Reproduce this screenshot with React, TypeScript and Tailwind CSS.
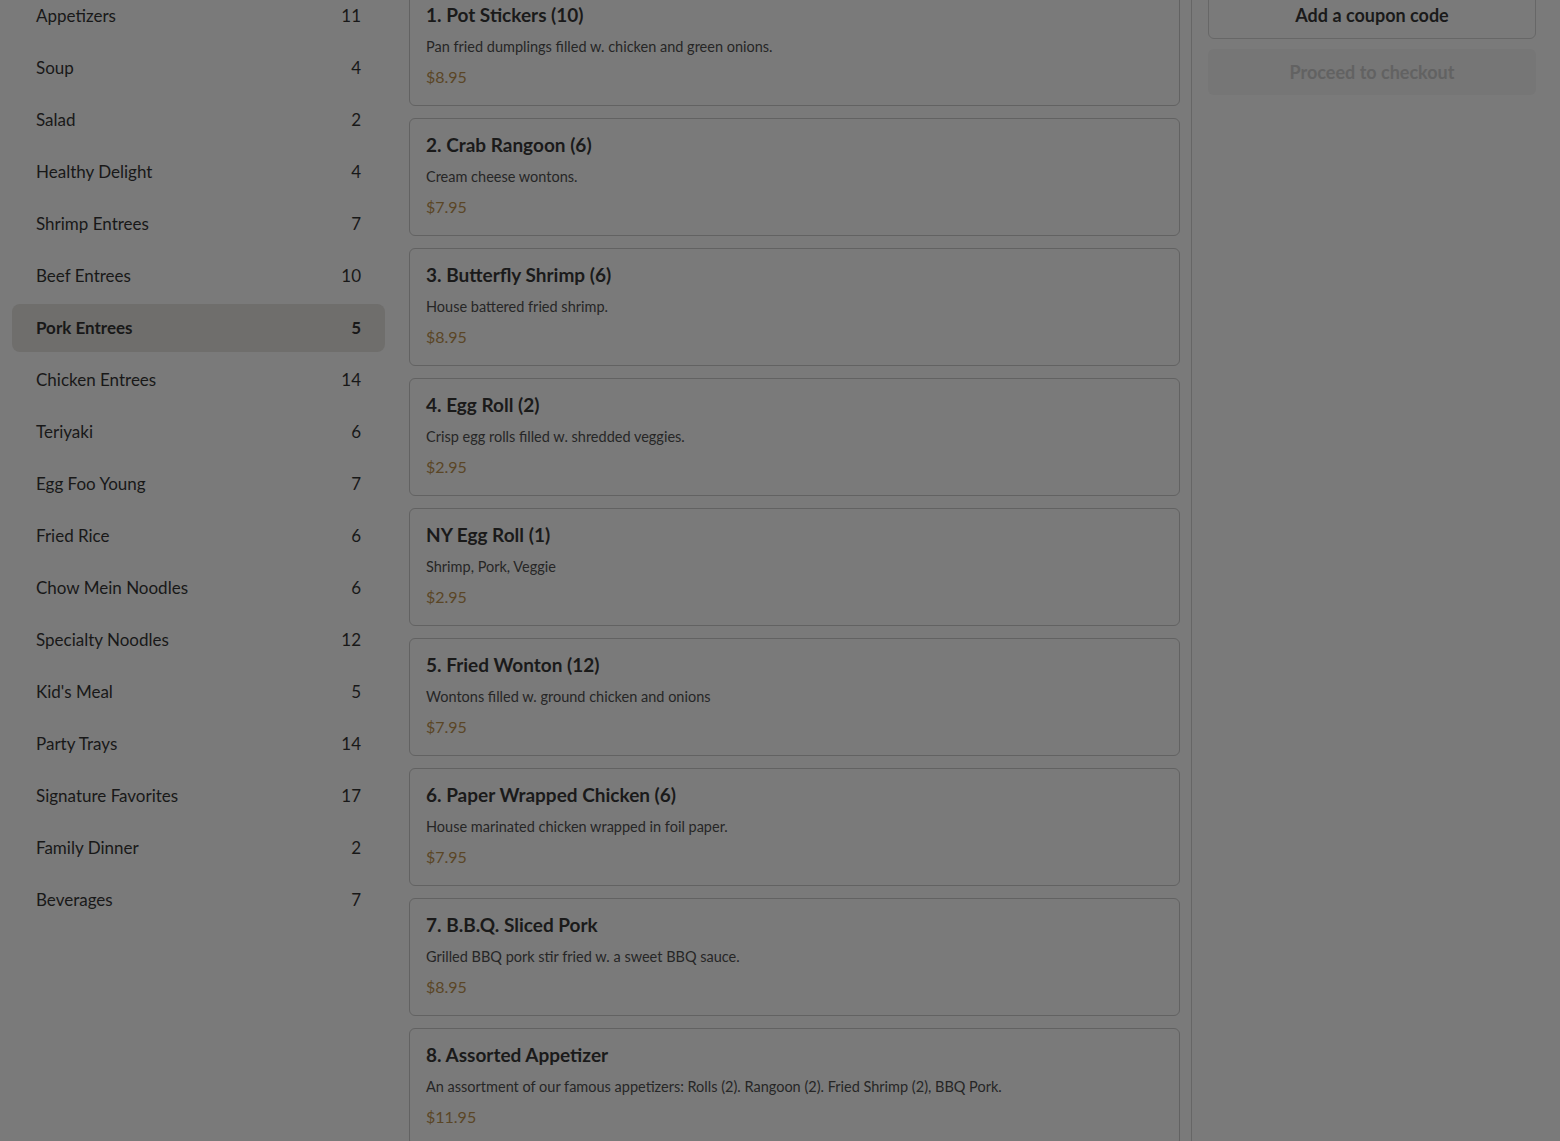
import React from 'react';

const categories = [
  { name: 'Appetizers', count: 11 },
  { name: 'Soup', count: 4 },
  { name: 'Salad', count: 2 },
  { name: 'Healthy Delight', count: 4 },
  { name: 'Shrimp Entrees', count: 7 },
  { name: 'Beef Entrees', count: 10 },
  { name: 'Pork Entrees', count: 5, active: true },
  { name: 'Chicken Entrees', count: 14 },
  { name: 'Teriyaki', count: 6 },
  { name: 'Egg Foo Young', count: 7 },
  { name: 'Fried Rice', count: 6 },
  { name: 'Chow Mein Noodles', count: 6 },
  { name: 'Specialty Noodles', count: 12 },
  { name: "Kid's Meal", count: 5 },
  { name: 'Party Trays', count: 14 },
  { name: 'Signature Favorites', count: 17 },
  { name: 'Family Dinner', count: 2 },
  { name: 'Beverages', count: 7 },
];

const items = [
  { name: '1. Pot Stickers (10)', desc: 'Pan fried dumplings filled w. chicken and green onions.', price: '$8.95' },
  { name: '2. Crab Rangoon (6)', desc: 'Cream cheese wontons.', price: '$7.95' },
  { name: '3. Butterfly Shrimp (6)', desc: 'House battered fried shrimp.', price: '$8.95' },
  { name: '4. Egg Roll (2)', desc: 'Crisp egg rolls filled w. shredded veggies.', price: '$2.95' },
  { name: 'NY Egg Roll (1)', desc: 'Shrimp, Pork, Veggie', price: '$2.95' },
  { name: '5. Fried Wonton (12)', desc: 'Wontons filled w. ground chicken and onions', price: '$7.95' },
  { name: '6. Paper Wrapped Chicken (6)', desc: 'House marinated chicken wrapped in foil paper.', price: '$7.95' },
  { name: '7. B.B.Q. Sliced Pork', desc: 'Grilled BBQ pork stir fried w. a sweet BBQ sauce.', price: '$8.95' },
  {
    name: '8. Assorted Appetizer',
    desc: 'An assortment of our famous appetizers: Rolls (2). Rangoon (2). Fried Shrimp (2), BBQ Pork.',
    price: '$11.95',
  },
];

function App() {
  return (
    <div
      className="flex h-[1141px] w-full overflow-hidden bg-[#7a7a7a] text-[#181818]"
      style={{ fontFamily: 'Lato, "Noto Sans", sans-serif' }}
    >
      {/* categories */}
      <aside className="mr-3 w-[397px] shrink-0 px-3">
        <ul className="-mt-[8px] flex flex-col gap-1">
          {categories.map((c) => (
            <li
              key={c.name}
              className={`flex h-12 items-center justify-between rounded-lg px-6 text-[17px] ${
                c.active ? 'bg-[#6f6e6c] font-bold' : ''
              }`}
            >
              <span>{c.name}</span>
              <span>{c.count}</span>
            </li>
          ))}
        </ul>
      </aside>

      {/* menu items */}
      <main className="w-[771px] shrink-0">
        <div className="-mt-3 flex flex-col gap-3">
          {items.map((it) => (
            <div
              key={it.name}
              className="flex flex-col gap-2 rounded-md border border-[#626262] px-4 pb-4 pt-3"
            >
              <h3 className="text-[19px] leading-7 font-bold text-[#1a1a1a]">{it.name}</h3>
              <p className="text-[14.5px] leading-5 text-[#262626]">{it.desc}</p>
              <span className="text-base leading-6 text-[#5a4626]">{it.price}</span>
            </div>
          ))}
        </div>
      </main>

      {/* cart */}
      <div className="ml-[11px] flex-1 border-l border-[#666666] pl-4 pr-6">
        <div className="-mt-[9px] flex w-[328px] flex-col gap-2.5">
          <button
            type="button"
            className="h-12 rounded-md border border-[#676767] text-[18px] font-bold text-[#1a1a1a]"
          >
            Add a coupon code
          </button>
          <button
            type="button"
            className="h-[46px] rounded-md bg-[#767676] text-[18px] font-bold text-[#626262]"
          >
            Proceed to checkout
          </button>
        </div>
      </div>
    </div>
  );
}

export default App;
